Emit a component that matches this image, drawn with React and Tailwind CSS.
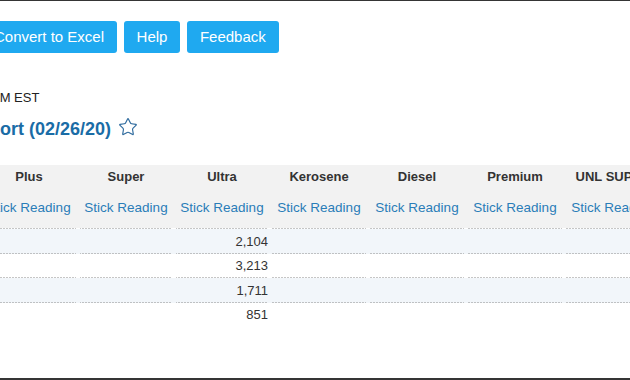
import React from "react";
import { Star } from "lucide-react";

const cols = [
  { name: "Plus", w: "w-[94px]" },
  { name: "Super", w: "w-[92px]" },
  { name: "Ultra", w: "w-[92px]" },
  { name: "Kerosene", w: "w-[94px]" },
  { name: "Diesel", w: "w-[94px]" },
  { name: "Premium", w: "w-[94px]" },
  { name: "UNL SUPER", w: "w-[94px]" },
];

const rows = [
  { v: "2,104", shade: true },
  { v: "3,213", shade: false },
  { v: "1,711", shade: true },
  { v: "851", shade: false, last: true },
];

const dots =
  "bg-[linear-gradient(to_right,#8c8c8c_1px,transparent_1px)] bg-[length:3px_1px] bg-repeat-x bg-bottom";

export default function App() {
  return (
    <div
      className="w-[630px] h-[380px] overflow-hidden bg-white border-t border-b-2 border-[#353535] text-[#222]"
      style={{ fontFamily: '"Liberation Sans", Arial, sans-serif' }}
    >
      <div className="ml-[-18px]">
        <div className="flex gap-[7px] mt-[20px] ml-[-1px]">
          <button className="h-[32px] px-[13px] rounded-[3px] bg-[#1fa9f0] text-white text-[15px]">Convert to Excel</button>
          <button className="h-[32px] px-[12.5px] rounded-[3px] bg-[#1fa9f0] text-white text-[15px]">Help</button>
          <button className="h-[32px] px-[13px] rounded-[3px] bg-[#1fa9f0] text-white text-[15px]">Feedback</button>
        </div>
        <div className="mt-[37px] ml-[9px] text-[13px] leading-[16px] text-[#222] whitespace-nowrap">AM EST</div>
        <div className="mt-[12px] ml-[-16px] flex items-center gap-[7px] whitespace-nowrap">
          <span className="text-[18px] leading-[22px] font-bold text-[#1a6ca6]">Report (02/26/20)</span>
          <Star size={20} strokeWidth={1.4} className="text-[#2f6b9e] -mt-[5px]" />
        </div>
        <div className="mt-[25px] w-[700px]">
          <div className="bg-[#f2f2f2]">
            <div className="flex gap-[4px] h-[24px] items-center">
              {cols.map((c) => (
                <div key={c.name} className={`${c.w} shrink-0 text-center text-[13px] font-bold text-[#333] whitespace-nowrap`}>
                  {c.name}
                </div>
              ))}
            </div>
            <div className="flex gap-[4px] pt-[11px] pb-[12px]">
              {cols.map((c) => (
                <div key={c.name} className={`${c.w} shrink-0 text-center text-[13.5px] leading-[16px] text-[#2a7db8] whitespace-nowrap`}>
                  Stick Reading
                </div>
              ))}
            </div>
          </div>
          <div className="flex gap-[4px]">
            {cols.map((c) => (
              <div key={c.name} className={`${c.w} shrink-0 h-px ${dots}`} />
            ))}
          </div>
          {rows.map((r, i) => (
            <div key={i} className={`flex gap-[4px] ${r.shade ? "bg-[#f2f6fa]" : "bg-white"}`}>
              {cols.map((c) => (
                <div
                  key={c.name}
                  className={`${c.w} shrink-0 h-[24.5px] flex items-center justify-end text-[13px] text-[#333] ${r.last ? "" : dots}`}
                >
                  {c.name === "Ultra" ? r.v : ""}
                </div>
              ))}
            </div>
          ))}
        </div>
      </div>
    </div>
  );
}
